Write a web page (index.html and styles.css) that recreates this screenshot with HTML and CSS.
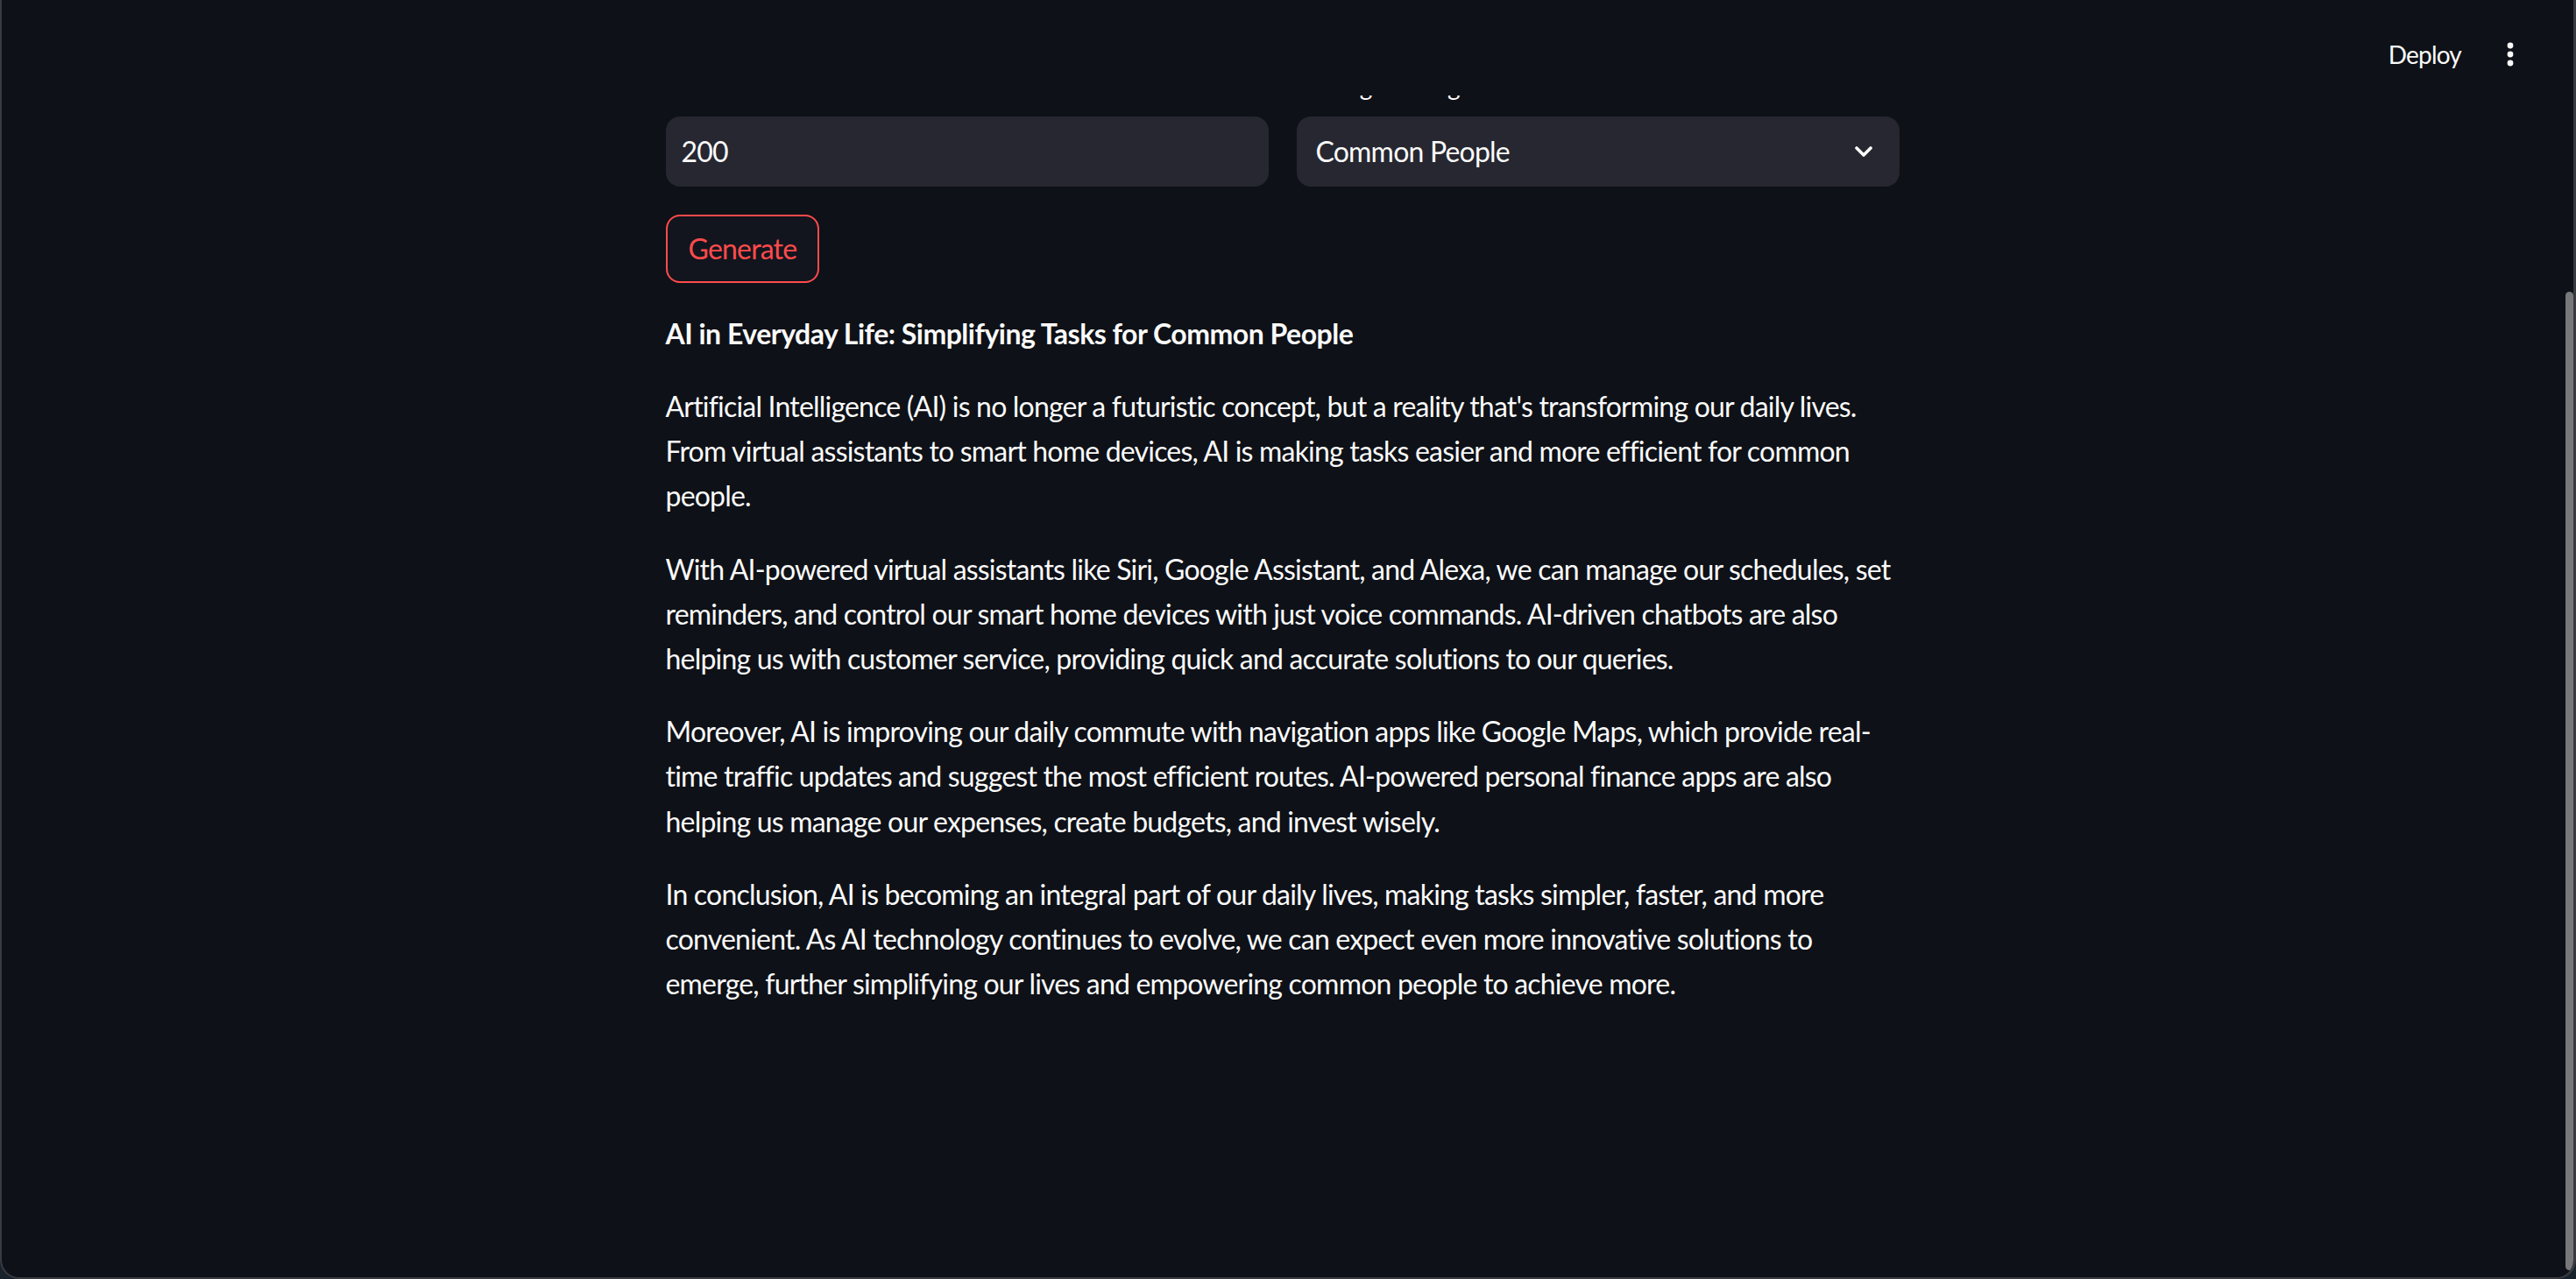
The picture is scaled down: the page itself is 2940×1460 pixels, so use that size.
FILE: index.html
```html
<!DOCTYPE html>
<html lang="en">
<head>
<meta charset="utf-8">
<title>Blog Generator</title>
<link rel="stylesheet" href="styles.css">
</head>
<body>
<div class="window">
  <header class="topbar">
    <div class="actions">
      <span class="deploy">Deploy</span>
      <span class="kebab">
        <svg width="40" height="40" viewBox="0 0 40 40"><circle cx="20" cy="10" r="3.4" fill="#fafafa"/><circle cx="20" cy="20" r="3.4" fill="#fafafa"/><circle cx="20" cy="30" r="3.4" fill="#fafafa"/></svg>
      </span>
    </div>
  </header>
  <div class="viewport">
    <main class="main">
      <div class="block">
        <div class="row">
          <div class="field">
            <label class="label">Number of Words</label>
            <div class="input">200</div>
          </div>
          <div class="field">
            <label class="label">Writing the blog for</label>
            <div class="input select">
              <span>Common People</span>
              <svg class="chev" width="20" height="12" viewBox="0 0 20 12"><path d="M2 2 L10 10 L18 2" fill="none" stroke="#fafafa" stroke-width="3.6" stroke-linecap="round" stroke-linejoin="round"/></svg>
            </div>
          </div>
        </div>
        <button class="btn">Generate</button>
        <div class="md">
          <p><strong>AI in Everyday Life: Simplifying Tasks for Common People</strong></p>
          <p>Artificial Intelligence (AI) is no longer a futuristic concept, but a reality that's transforming our daily lives. From virtual assistants to smart home devices, AI is making tasks easier and more efficient for common people.</p>
          <p>With AI-powered virtual assistants like Siri, Google Assistant, and Alexa, we can manage our schedules, set reminders, and control our smart home devices with just voice commands. AI-driven chatbots are also helping us with customer service, providing quick and accurate solutions to our queries.</p>
          <p>Moreover, AI is improving our daily commute with navigation apps like Google Maps, which provide real-time traffic updates and suggest the most efficient routes. AI-powered personal finance apps are also helping us manage our expenses, create budgets, and invest wisely.</p>
          <p>In conclusion, AI is becoming an integral part of our daily lives, making tasks simpler, faster, and more convenient. As AI technology continues to evolve, we can expect even more innovative solutions to emerge, further simplifying our lives and empowering common people to achieve more.</p>
        </div>
      </div>
    </main>
    <div class="scrollbar"><div class="thumb"></div></div>
  </div>
</div>
</body>
</html>
```

FILE: styles.css
```css
html, body {
  margin: 0;
  padding: 0;
  background: #18222c;
  overflow: hidden;
}

body {
  font-family: "Lato", "Roboto", sans-serif;
  color: #fafafa;
  letter-spacing: -0.8px;
}

.window {
  position: relative;
  width: 2940px;
  height: 1460px;
  box-sizing: border-box;
  background: #0e1117;
  border-left: 2px solid #3a3b40;
  border-right: 3px solid #3a3b40;
  border-bottom: 2px solid #3a3b40;
  border-radius: 0 0 22px 22px;
  overflow: hidden;
}

.topbar {
  position: absolute;
  top: 0;
  left: 0;
  right: 12px;
  height: 109px;
  background: #0e1117;
  z-index: 5;
}

.actions {
  height: 124px;
  display: flex;
  align-items: center;
  justify-content: flex-end;
  gap: 36px;
  padding-right: 40px;
}

.deploy {
  font-size: 28px;
  color: #fafafa;
}

.kebab {
  display: flex;
  width: 40px;
  height: 40px;
}

.viewport {
  display: flex;
  height: 100%;
}

.main {
  flex: 1;
  display: flex;
  justify-content: center;
}

.block {
  width: 1408px;
  padding-top: 76px;
}

.row {
  display: grid;
  grid-template-columns: 1fr 1fr;
  gap: 32px;
}

.label {
  display: block;
  font-size: 28px;
  line-height: 44.8px;
  margin-bottom: 12px;
}

.input {
  height: 80px;
  box-sizing: border-box;
  background: #262730;
  border-radius: 16px;
  padding: 0 18px;
  display: flex;
  align-items: center;
  font-size: 32px;
}

.select {
  padding: 0 31px 0 22px;
  justify-content: space-between;
}

.btn {
  margin-top: 32px;
  height: 78px;
  padding: 0 24px;
  box-sizing: border-box;
  background: #12151e;
  border: 2px solid #ff4b4b;
  border-radius: 16px;
  color: #ff4b4b;
  font-family: inherit;
  font-size: 32px;
  letter-spacing: -0.8px;
}

.md {
  margin-top: 32px;
  font-size: 32px;
  line-height: 51.2px;
}

.md p {
  margin: 0 0 32px;
}

.md strong {
  font-weight: 700;
  letter-spacing: -0.5px;
}

.scrollbar {
  width: 12px;
  display: flex;
  flex-direction: column;
  padding: 333px 0 8px 3px;
  box-sizing: border-box;
}

.thumb {
  flex: 1;
  width: 9px;
  background: #77787c;
  border-radius: 5px;
}
```
